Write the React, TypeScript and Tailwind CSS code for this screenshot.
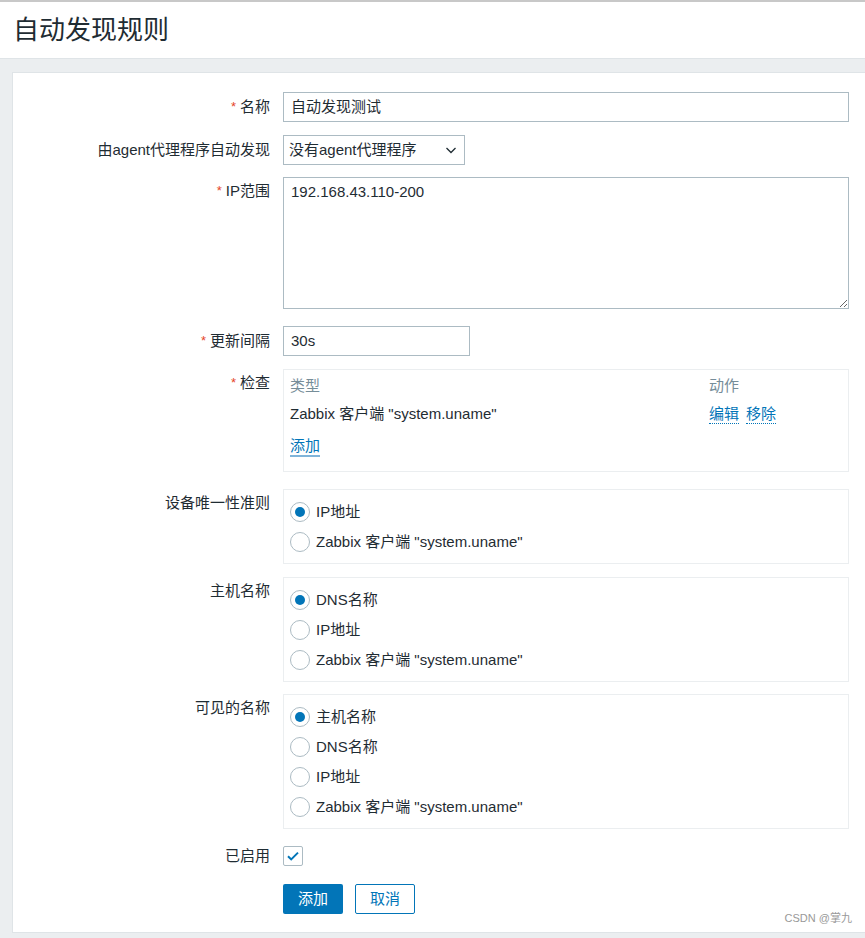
import React from "react"

const labelCls = "w-[270px] shrink-0 pr-[13px] text-right text-[15px] text-[#1f2c33]"
const boxCls = "flex-1 mr-[16px] border border-[#ebeef0] bg-white"

function Star() {
  return <span className="mr-[4px] text-[#e54528] text-[13px] align-top">*</span>
}

function Radio({ checked, label }: { checked?: boolean; label: string }) {
  return (
    <div className="flex h-[30px] items-center">
      <span className="flex h-[20px] w-[20px] items-center justify-center rounded-full border border-[#acbbc3] bg-white">
        {checked && <span className="h-[10px] w-[10px] rounded-full bg-[#0275b8]" />}
      </span>
      <span className="ml-[6px] text-[15px] text-[#1f2c33]">{label}</span>
    </div>
  )
}

function RadioBox({ items }: { items: string[] }) {
  return (
    <div className={`${boxCls} px-[6px] pt-[7px] pb-[6px]`}>
      {items.map((t, i) => (
        <Radio key={t} label={t} checked={i === 0} />
      ))}
    </div>
  )
}

export default function App() {
  return (
    <div
      className="min-h-[938px] bg-[#ebeef0] text-[#1f2c33]"
      style={{ fontFamily: '"Liberation Sans", "Noto Sans CJK SC", sans-serif' }}
    >
      {/* header */}
      <div className="border-t-2 border-[#c8c8c8] border-b border-b-[#dfe4e7] bg-white h-[59px] pl-[13px]">
        <h1 className="pt-[12px] text-[26px] leading-[32px] font-normal text-[#1f2c33]">自动发现规则</h1>
      </div>

      <div className="pt-[13px] pl-[12px] pb-[5px]">
        <div className="border border-[#dfe4e7] border-r-0 bg-white pt-[19px] pb-[18px]">
          {/* 名称 */}
          <div className="flex">
            <div className={`${labelCls} leading-[30px]`}><Star />名称</div>
            <div className="flex-1 mr-[16px] h-[30px] border border-[#acbbc3] px-[7px] leading-[28px] text-[15px]">自动发现测试</div>
          </div>

          {/* agent */}
          <div className="mt-[13px] flex">
            <div className={`${labelCls} leading-[30px]`}>由agent代理程序自动发现</div>
            <div className="flex h-[30px] w-[182px] items-center justify-between border border-[#acbbc3] pl-[5px] pr-[6px] text-[15px]">
              <span>没有agent代理程序</span>
              <svg width="14" height="14" viewBox="0 0 14 14" fill="none">
                <path d="M2.5 5l4.5 4.5L11.5 5" stroke="#1f2c33" strokeWidth="1.3" />
              </svg>
            </div>
          </div>

          {/* IP范围 */}
          <div className="mt-[12px] flex">
            <div className={`${labelCls} leading-[28px]`}><Star />IP范围</div>
            <textarea
              readOnly
              value="192.168.43.110-200"
              className="flex-1 mr-[16px] h-[132px] resize border border-[#acbbc3] px-[7px] py-[5px] text-[15px] leading-[18px] text-[#1f2c33] outline-none"
              style={{ fontFamily: '"Liberation Sans", "Noto Sans CJK SC", sans-serif' }}
            />
          </div>

          {/* 更新间隔 */}
          <div className="mt-[17px] flex">
            <div className={`${labelCls} leading-[30px]`}><Star />更新间隔</div>
            <div className="h-[30px] w-[187px] border border-[#acbbc3] px-[7px] leading-[28px] text-[15px]">30s</div>
          </div>

          {/* 检查 */}
          <div className="mt-[13px] flex">
            <div className={`${labelCls} leading-[28px]`}><Star />检查</div>
            <div className={`${boxCls} h-[103px] pl-[6px] pt-[6px] text-[15px]`}>
              <div className="flex h-[20px] items-center text-[#768d99]">
                <span className="w-[419px]">类型</span>
                <span>动作</span>
              </div>
              <div className="mt-[8px] flex h-[20px] items-center">
                <span className="w-[419px]">Zabbix 客户端 "system.uname"</span>
                <span className="text-[#0275b8] border-b border-dotted border-[#0275b8] leading-[18px]">编辑</span>
                <span className="ml-[7px] text-[#0275b8] border-b border-dotted border-[#0275b8] leading-[18px]">移除</span>
              </div>
              <div className="mt-[13px] flex">
                <span className="text-[#0275b8] border-b-2 border-[#7fb4d9] leading-[18px]">添加</span>
              </div>
            </div>
          </div>

          {/* 设备唯一性准则 */}
          <div className="mt-[17px] flex">
            <div className={`${labelCls} leading-[28px]`}>设备唯一性准则</div>
            <RadioBox items={["IP地址", 'Zabbix 客户端 "system.uname"']} />
          </div>

          {/* 主机名称 */}
          <div className="mt-[13px] flex">
            <div className={`${labelCls} leading-[28px]`}>主机名称</div>
            <RadioBox items={["DNS名称", "IP地址", 'Zabbix 客户端 "system.uname"']} />
          </div>

          {/* 可见的名称 */}
          <div className="mt-[12px] flex">
            <div className={`${labelCls} leading-[28px]`}>可见的名称</div>
            <RadioBox items={["主机名称", "DNS名称", "IP地址", 'Zabbix 客户端 "system.uname"']} />
          </div>

          {/* 已启用 */}
          <div className="mt-[17px] flex items-center">
            <div className={`${labelCls} leading-[20px]`}>已启用</div>
            <span className="flex h-[20px] w-[20px] items-center justify-center rounded-[2px] border border-[#acbbc3] bg-white">
              <svg width="14" height="14" viewBox="0 0 14 14" fill="none">
                <path d="M2 7.2l3.2 3.2L12 3.6" stroke="#0275b8" strokeWidth="2" />
              </svg>
            </span>
          </div>

          {/* buttons */}
          <div className="mt-[18px] flex">
            <div className="w-[270px] shrink-0" />
            <button className="h-[30px] w-[60px] rounded-[2px] bg-[#0275b8] text-[15px] text-white">添加</button>
            <button className="ml-[12px] h-[30px] w-[60px] rounded-[2px] border border-[#0275b8] bg-white text-[15px] text-[#0275b8]">取消</button>
            <div className="flex-1" />
            <span className="self-end mr-[13px] mb-[-12px] text-[11px] text-[#999]">CSDN @掌九</span>
          </div>
        </div>
      </div>
    </div>
  )
}
